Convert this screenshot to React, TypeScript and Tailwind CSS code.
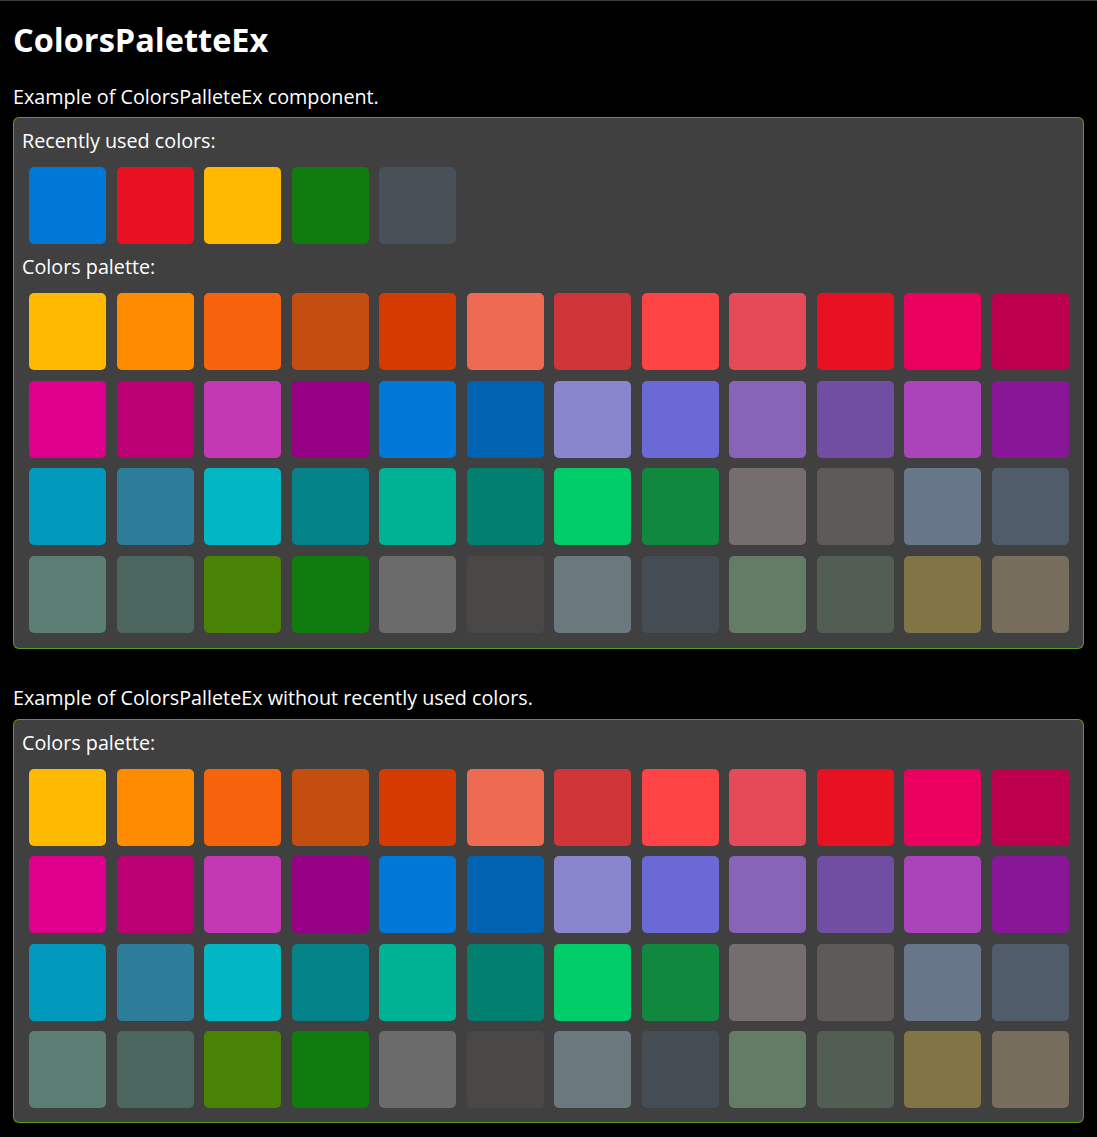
import React from "react";

const palette: string[] = [
  "#FFB900", "#FF8C00", "#F7630C", "#C34E10", "#D53A01", "#EF6A53", "#CF3539", "#FD4343", "#E64A59", "#E81123", "#EA005E", "#BC004E",
  "#DE008C", "#BA0072", "#C239B3", "#960084", "#0078D7", "#0063B1", "#8986CD", "#6B69D6", "#8764B8", "#714EA1", "#AB43BA", "#881798",
  "#0099BC", "#2D7D9A", "#00B7C3", "#038387", "#00B294", "#018070", "#00CC6A", "#10893E", "#746F6E", "#5D5A58", "#68768A", "#515C6B",
  "#5B7D74", "#4A665E", "#498205", "#107C10", "#6B6B6B", "#4A4846", "#69797E", "#454D54", "#647C64", "#525E54", "#827545", "#776D5C",
];

const recent: string[] = ["#0078D7", "#E81123", "#FFB900", "#107C10", "#4A5058"];

function Grid({ colors }: { colors: string[] }) {
  return (
    <div className="mt-3 ml-[7px] grid grid-cols-[repeat(12,77px)] gap-x-[10.5px] gap-y-[10.5px]">
      {colors.map((c, i) => (
        <div key={i} className="h-[77px] w-[77px] rounded-[5px]" style={{ backgroundColor: c }} />
      ))}
    </div>
  );
}

function Label({ children }: { children: React.ReactNode }) {
  return <div className="h-7 text-[19.75px] leading-7 text-white">{children}</div>;
}

function Panel({ children, pb }: { children: React.ReactNode; pb: string }) {
  return (
    <div className="rounded-[6px] bg-[#5E9E14] p-px">
      <div className={`rounded-[5px] bg-[#404040] pt-[9px] pl-2 ${pb}`}>{children}</div>
    </div>
  );
}

export default function App() {
  return (
    <div
      className="min-h-[1137px] bg-black px-[13px] border-t border-solid border-[#3a3a3a]"
      style={{ fontFamily: '"Open Sans", "Noto Sans", sans-serif' }}
    >
      <div className="mt-[19px] h-10 text-[32.5px] font-bold leading-10 text-white">ColorsPaletteEx</div>
      <div className="mt-[23px] h-7 text-[19.75px] leading-7 text-white">Example of ColorsPalleteEx component.</div>
      <div className="mt-[6px]">
        <Panel pb="pb-[15px]">
          <Label>Recently used colors:</Label>
          <Grid colors={recent} />
          <div className="mt-[9px]">
            <Label>Colors palette:</Label>
            <Grid colors={palette} />
          </div>
        </Panel>
      </div>
      <div className="mt-[35px] h-7 text-[19.75px] leading-7 text-white">
        Example of ColorsPalleteEx without recently used colors.
      </div>
      <div className="mt-[7px]">
        <Panel pb="pb-[14px]">
          <Label>Colors palette:</Label>
          <Grid colors={palette} />
        </Panel>
      </div>
    </div>
  );
}
